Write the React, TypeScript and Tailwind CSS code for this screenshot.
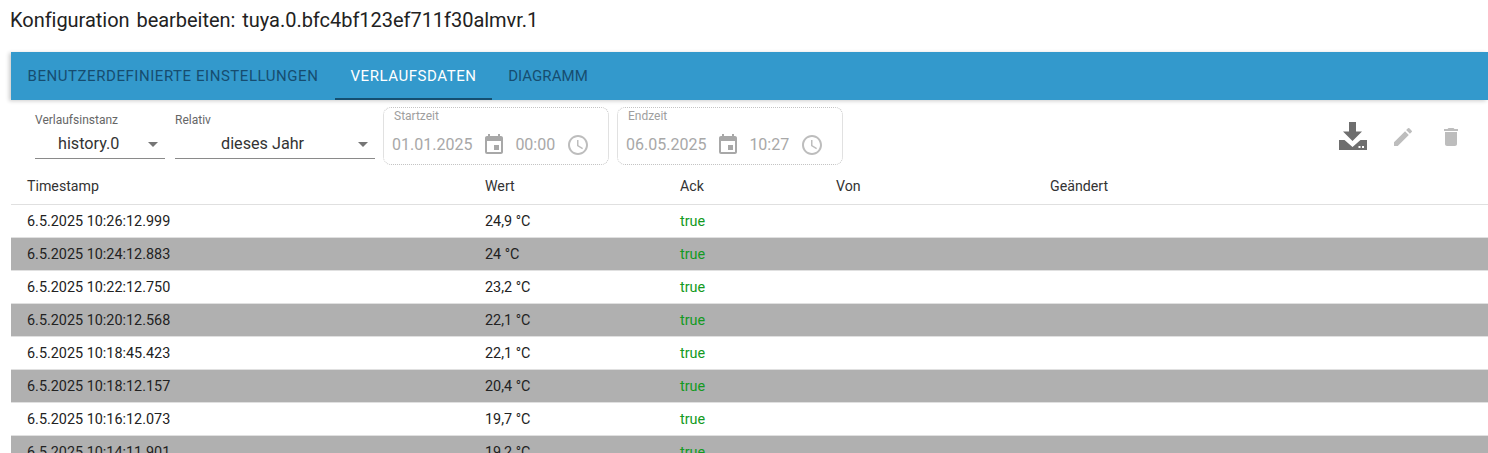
import { MdAccessTime, MdArrowDropDown, MdDelete, MdEdit, MdEvent } from 'react-icons/md';

const rows = [
    { ts: '6.5.2025 10:26:12.999', val: '24,9 °C' },
    { ts: '6.5.2025 10:24:12.883', val: '24 °C' },
    { ts: '6.5.2025 10:22:12.750', val: '23,2 °C' },
    { ts: '6.5.2025 10:20:12.568', val: '22,1 °C' },
    { ts: '6.5.2025 10:18:45.423', val: '22,1 °C' },
    { ts: '6.5.2025 10:18:12.157', val: '20,4 °C' },
    { ts: '6.5.2025 10:16:12.073', val: '19,7 °C' },
    { ts: '6.5.2025 10:14:11.901', val: '19,2 °C' },
];

const gridCols = 'grid grid-cols-[458px_195px_156px_214px_1fr]';

const SelectField = ({ label, value, className, valueClass }: { label: string; value: string; className: string; valueClass: string }) => (
    <div className={`flex flex-col ${className}`}>
        <span className="text-[12px] leading-[14px] text-[#666] mt-[13px]">{label}</span>
        <div className="relative h-[32px] border-b border-[#8a8a8a] flex items-center pt-[4px]">
            <span className={`text-[16.2px] text-[#333] ${valueClass}`}>{value}</span>
            <MdArrowDropDown className="absolute right-0 top-[5px] text-[#757575]" size={24} />
        </div>
    </div>
);

const TimeField = ({ label, date, time }: { label: string; date: string; time: string }) => (
    <div className="relative w-[226px] h-[58px] border border-dotted border-[#c4c4c4] rounded-lg">
        <span className="absolute left-[10px] top-[1px] text-[12px] leading-[14px] text-[#9e9e9e]">{label}</span>
        <div className="flex items-center h-[24px] mt-[25px] pl-[8px] text-[16px] text-[#a8a8a8]">
            <span>{date}</span>
            <MdEvent className="ml-[10px] text-[#a8a8a8]" size={24} />
            <span className="ml-[9px]">{time}</span>
            <MdAccessTime className="ml-[11px] text-[#bdbdbd]" size={24} />
        </div>
    </div>
);

const DownloadIcon = () => (
    <svg width="30" height="30" viewBox="0 0 30 30" fill="#6e6e6e">
        <path d="M11 1h7v9.500h6L14.500 20 5 10.500h6z" />
        <path d="M1 19h5.500l8 7 8-7H29v10H1z" />
        <rect x="20.500" y="25" width="2" height="2" fill="#fff" />
        <rect x="24" y="25" width="2" height="2" fill="#fff" />
    </svg>
);

export default function App() {
    return (
        <div className="h-[453px] overflow-hidden bg-white font-['Roboto',sans-serif]">
            <div className="h-[52px] pl-[10px] pt-[6px] text-[20px] leading-[28px] text-[#222] [word-spacing:2px] tracking-[-0.03px]">
                Konfiguration bearbeiten: tuya.0.bfc4bf123ef711f30almvr.1
            </div>

            <div className="ml-[11px]">
                {/* Tabs */}
                <div className="flex h-[48px] bg-[#3399cc] shadow-[-2px_1px_4px_rgba(0,0,0,0.2)] relative z-10">
                    <div className="w-[324px] flex items-center justify-center text-[15px] tracking-[0.55px] text-[#164d70]">BENUTZERDEFINIERTE EINSTELLUNGEN</div>
                    <div className="w-[157px] flex items-center justify-center text-[15px] tracking-[0.55px] text-white border-b-2 border-[#154f70] pt-[2px]">VERLAUFSDATEN</div>
                    <div className="w-[112px] flex items-center justify-center text-[15px] tracking-[0.05px] text-[#164d70]">DIAGRAMM</div>
                </div>

                {/* Toolbar */}
                <div className="flex h-[70px] pl-[24px] relative">
                    <SelectField label="Verlaufsinstanz" value="history.0" className="w-[130px]" valueClass="pl-[23px]" />
                    <SelectField label="Relativ" value="dieses Jahr" className="w-[200px] ml-[10px]" valueClass="pl-[46px]" />
                    <div className="flex gap-[8px] ml-[8px] mt-[7px]">
                        <TimeField label="Startzeit" date="01.01.2025" time="00:00" />
                        <TimeField label="Endzeit" date="06.05.2025" time="10:27" />
                    </div>
                    <div className="ml-auto flex items-start pt-[21px] pr-[25px]">
                        <DownloadIcon />
                        <MdEdit className="ml-[23px] mt-[4px] text-[#bdbdbd]" size={24} />
                        <MdDelete className="ml-[24px] mt-[4px] text-[#bdbdbd]" size={24} />
                    </div>
                </div>

                {/* Table */}
                <div className={`${gridCols} h-[35px] items-center border-b border-[#e0e0e0] text-[14.2px] text-[#333]`}>
                    <span className="pl-[16px]">Timestamp</span>
                    <span className="pl-[16px]">Wert</span>
                    <span className="pl-[16px]">Ack</span>
                    <span className="pl-[16px]">Von</span>
                    <span className="pl-[16px]">Geändert</span>
                </div>
                {rows.map((row, i) => (
                    <div
                        key={row.ts}
                        className={`${gridCols} h-[33px] items-center border-b border-[#e0e0e0] text-[14.4px] pt-[1px] ${i % 2 === 1 ? 'bg-[#b0b0b0]' : 'bg-white'}`}
                    >
                        <span className="pl-[16px] text-[#222]">{row.ts}</span>
                        <span className="pl-[16px] text-[#222]">{row.val}</span>
                        <span className="pl-[16px] text-[#139a22]">true</span>
                        <span />
                        <span />
                    </div>
                ))}
            </div>
        </div>
    );
}
